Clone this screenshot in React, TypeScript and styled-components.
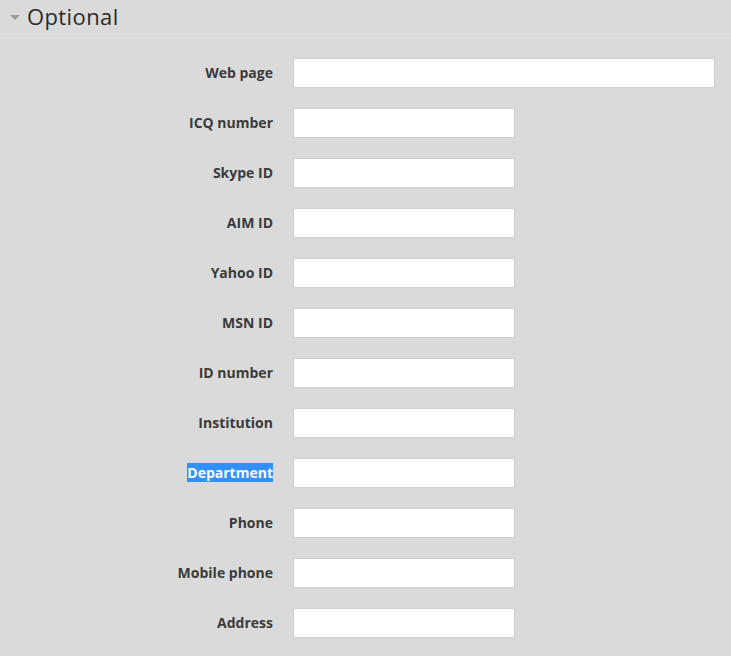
import React from 'react'
import styled, { createGlobalStyle } from 'styled-components'

const GlobalStyle = createGlobalStyle`
    html, body {
        margin: 0;
        padding: 0;
        background: #dadada;
    }
    body {
        font-family: 'Open Sans', 'Liberation Sans', sans-serif;
        color: #333;
    }
    ::selection {
        background: #3390ff;
        color: #fff;
    }
`

const Page = styled.div`
    width: 731px;
    min-height: 656px;
    background: #dadada;
`

const Legend = styled.div`
    box-sizing: border-box;
    height: 38px;
    display: flex;
    align-items: center;
    gap: 7px;
    padding: 0 0 5px 10px;
    border-bottom: 1px solid #e1e1e1;
    font-size: 22px;
    color: #2a2a2a;
    letter-spacing: 0.4px;
`

const Caret = styled.span`
    width: 0;
    height: 0;
    border-left: 5.5px solid transparent;
    border-right: 5.5px solid transparent;
    border-top: 5px solid #9a9a9a;
    margin-top: 2px;
`

const Form = styled.div`
    display: flex;
    flex-direction: column;
    gap: 20px;
    padding-top: 20px;
`

const Row = styled.div`
    display: grid;
    grid-template-columns: 273px 1fr;
    column-gap: 20px;
    align-items: center;
    height: 30px;
`

const Label = styled.label`
    justify-self: end;
    font-size: 14px;
    font-weight: 700;
    color: #3a3a3a;
    line-height: 18px;
`

const Field = styled.input<{ $wide?: boolean }>`
    box-sizing: border-box;
    width: ${(p) => (p.$wide ? '422px' : '222px')};
    height: 30px;
    margin: 0;
    background: #fff;
    border: 1px solid #cfcfcf;
    border-radius: 0;
    padding: 4px 8px;
    font-size: 14px;
    outline: none;
`

const fields = [
    'Web page',
    'ICQ number',
    'Skype ID',
    'AIM ID',
    'Yahoo ID',
    'MSN ID',
    'ID number',
    'Institution',
    'Department',
    'Phone',
    'Mobile phone',
    'Address',
]

export default function App(): JSX.Element {
    React.useEffect(() => {
        // the department label is shown selected in the screenshot
        const el = document.getElementById('label-department')
        const sel = window.getSelection()
        if (el && sel) {
            const range = document.createRange()
            range.selectNodeContents(el)
            sel.removeAllRanges()
            sel.addRange(range)
        }
    }, [])

    return (
        <Page>
            <GlobalStyle />
            <Legend>
                <Caret />
                <span>Optional</span>
            </Legend>
            <Form>
                {fields.map((name, index) => (
                    <Row key={name}>
                        <Label
                            id={name == 'Department' ? 'label-department' : undefined}
                        >
                            {name}
                        </Label>
                        <Field type="text" $wide={index == 0} />
                    </Row>
                ))}
            </Form>
        </Page>
    )
}
